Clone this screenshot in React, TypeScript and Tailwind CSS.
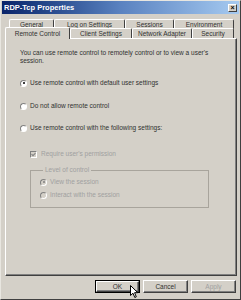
import React from "react";

const font = { fontFamily: '"Liberation Sans", Arial, sans-serif' };

function Radio({ checked, disabled }: { checked?: boolean; disabled?: boolean }) {
  return (
    <span
      className={`relative inline-block w-[7px] h-[7px] shrink-0 rounded-full border border-t-[#808080] border-l-[#808080] border-b-white border-r-white ${
        disabled ? "bg-[#d4d0c8]" : "bg-white"
      }`}
    >
      {checked && (
        <span
          className={`absolute left-[1.5px] top-[1.5px] w-[2px] h-[2px] rounded-full ${
            disabled ? "bg-[#808080]" : "bg-black"
          }`}
        />
      )}
    </span>
  );
}

function Tab({ label, w, selected }: { label: string; w: string; selected?: boolean }) {
  return (
    <div
      className={`${w} flex items-center justify-center rounded-t-[2px] border-t border-l border-white border-r border-r-[#404040] text-[6.5px] text-[#303030] ${
        selected ? "h-[12px] -mb-[1px] bg-[#d4d0c8] relative z-10" : "h-[10px]"
      }`}
    >
      {label}
    </div>
  );
}

function Button({ label, def, disabled }: { label: string; def?: boolean; disabled?: boolean }) {
  return (
    <div
      className={`w-[45px] h-[13px] flex items-center justify-center text-[6.5px] ${
        def ? "border border-black" : ""
      }`}
    >
      <div
        className={`w-full h-full flex items-center justify-center border border-t-white border-l-white border-r-[#404040] border-b-[#404040] shadow-[inset_-1px_-1px_#808080] ${
          disabled ? "text-[#a0a0a0]" : "text-[#303030]"
        }`}
      >
        {label}
      </div>
    </div>
  );
}

export default function App() {
  return (
    <div
      className="relative w-[241px] h-[300px] overflow-hidden bg-[#d4d0c8] border border-t-[#e8e6e0] border-l-[#e8e6e0] border-r-[#404040] border-b-[#404040] flex flex-col"
      style={font}
    >
      {/* Title bar */}
      <div className="h-[13px] mx-[1px] bg-linear-to-r from-[#0a246a] via-[#5a82c0] to-[#a6caf0] flex items-center justify-between pl-[2px] pr-[2px]">
        <span className="text-[7.5px] font-bold text-white leading-none">RDP-Tcp Properties</span>
        <span className="w-[9px] h-[8px] bg-[#d4d0c8] border border-t-white border-l-white border-r-[#404040] border-b-[#404040] flex items-center justify-center text-[7px] leading-none font-bold text-black">
          ×
        </span>
      </div>

      {/* Tabs */}
      <div className="mt-[5px] flex flex-col">
        <div className="flex pl-[8px]">
          <Tab label="General" w="w-[45px]" />
          <Tab label="Log on Settings" w="w-[71px]" />
          <Tab label="Sessions" w="w-[49px]" />
          <Tab label="Environment" w="w-[60px]" />
        </div>
        <div className="flex items-end pl-[4px] -mt-[2px]">
          <Tab label="Remote Control" w="w-[65px]" selected />
          <Tab label="Client Settings" w="w-[62px]" />
          <Tab label="Network Adapter" w="w-[60px]" />
          <Tab label="Security" w="w-[42px]" />
        </div>
      </div>

      {/* Panel */}
      <div className="ml-[4px] mr-[3px] h-[238px] border border-t-white border-l-white border-r-[#404040] border-b-[#404040] shadow-[inset_-1px_-1px_#808080] text-[6.5px] leading-[8px] text-[#303030] pl-[14px] pt-[10px] flex flex-col">
        <p className="w-[200px]">You can use remote control to remotely control or to view a user's session.</p>

        <div className="mt-[14px] flex items-center gap-[3px] h-[8px]">
          <Radio checked />
          <span>Use remote control with default user settings</span>
        </div>
        <div className="mt-[15px] flex items-center gap-[3px] h-[8px]">
          <Radio />
          <span>Do not allow remote control</span>
        </div>
        <div className="mt-[14px] flex items-center gap-[3px] h-[8px]">
          <Radio />
          <span>Use remote control with the following settings:</span>
        </div>

        <div className="mt-[18px] ml-[10px] flex items-center gap-[4px] h-[8px] text-[#a0a0a0]">
          <span className="relative w-[7px] h-[7px] shrink-0 bg-[#d4d0c8] border border-t-[#808080] border-l-[#808080] border-b-white border-r-white flex items-center justify-center">
            <svg width="5" height="5" viewBox="0 0 5 5">
              <path d="M0.5 2.2 L2 3.7 L4.5 1" stroke="#808080" strokeWidth="1.1" fill="none" />
            </svg>
          </span>
          <span>Require user's permission</span>
        </div>

        <fieldset className="mt-[8px] ml-[10px] w-[179px] h-[42px] border border-[#a8a49c] pl-[9px] text-[#a0a0a0]">
          <legend className="ml-[3px] px-[2px] leading-[8px]">Level of control</legend>
          <div className="mt-[4px] flex items-center gap-[3px] h-[8px]">
            <Radio checked disabled />
            <span>View the session</span>
          </div>
          <div className="mt-[5px] flex items-center gap-[3px] h-[8px]">
            <Radio disabled />
            <span>Interact with the session</span>
          </div>
        </fieldset>
      </div>

      {/* Buttons */}
      <div className="mt-[4px] flex justify-end gap-[3px] pr-[4px]">
        <Button label="OK" def />
        <Button label="Cancel" />
        <Button label="Apply" disabled />
      </div>

      {/* Mouse pointer */}
      <svg className="absolute left-[129px] top-[284px]" width="9" height="14" viewBox="0 0 9 14">
        <path d="M0.5 0.5 L0.5 10.5 L3 8.2 L4.8 12.5 L6.3 11.8 L4.6 7.7 L7.8 7.7 Z" fill="white" stroke="black" strokeWidth="1" strokeLinejoin="miter" />
      </svg>
    </div>
  );
}
